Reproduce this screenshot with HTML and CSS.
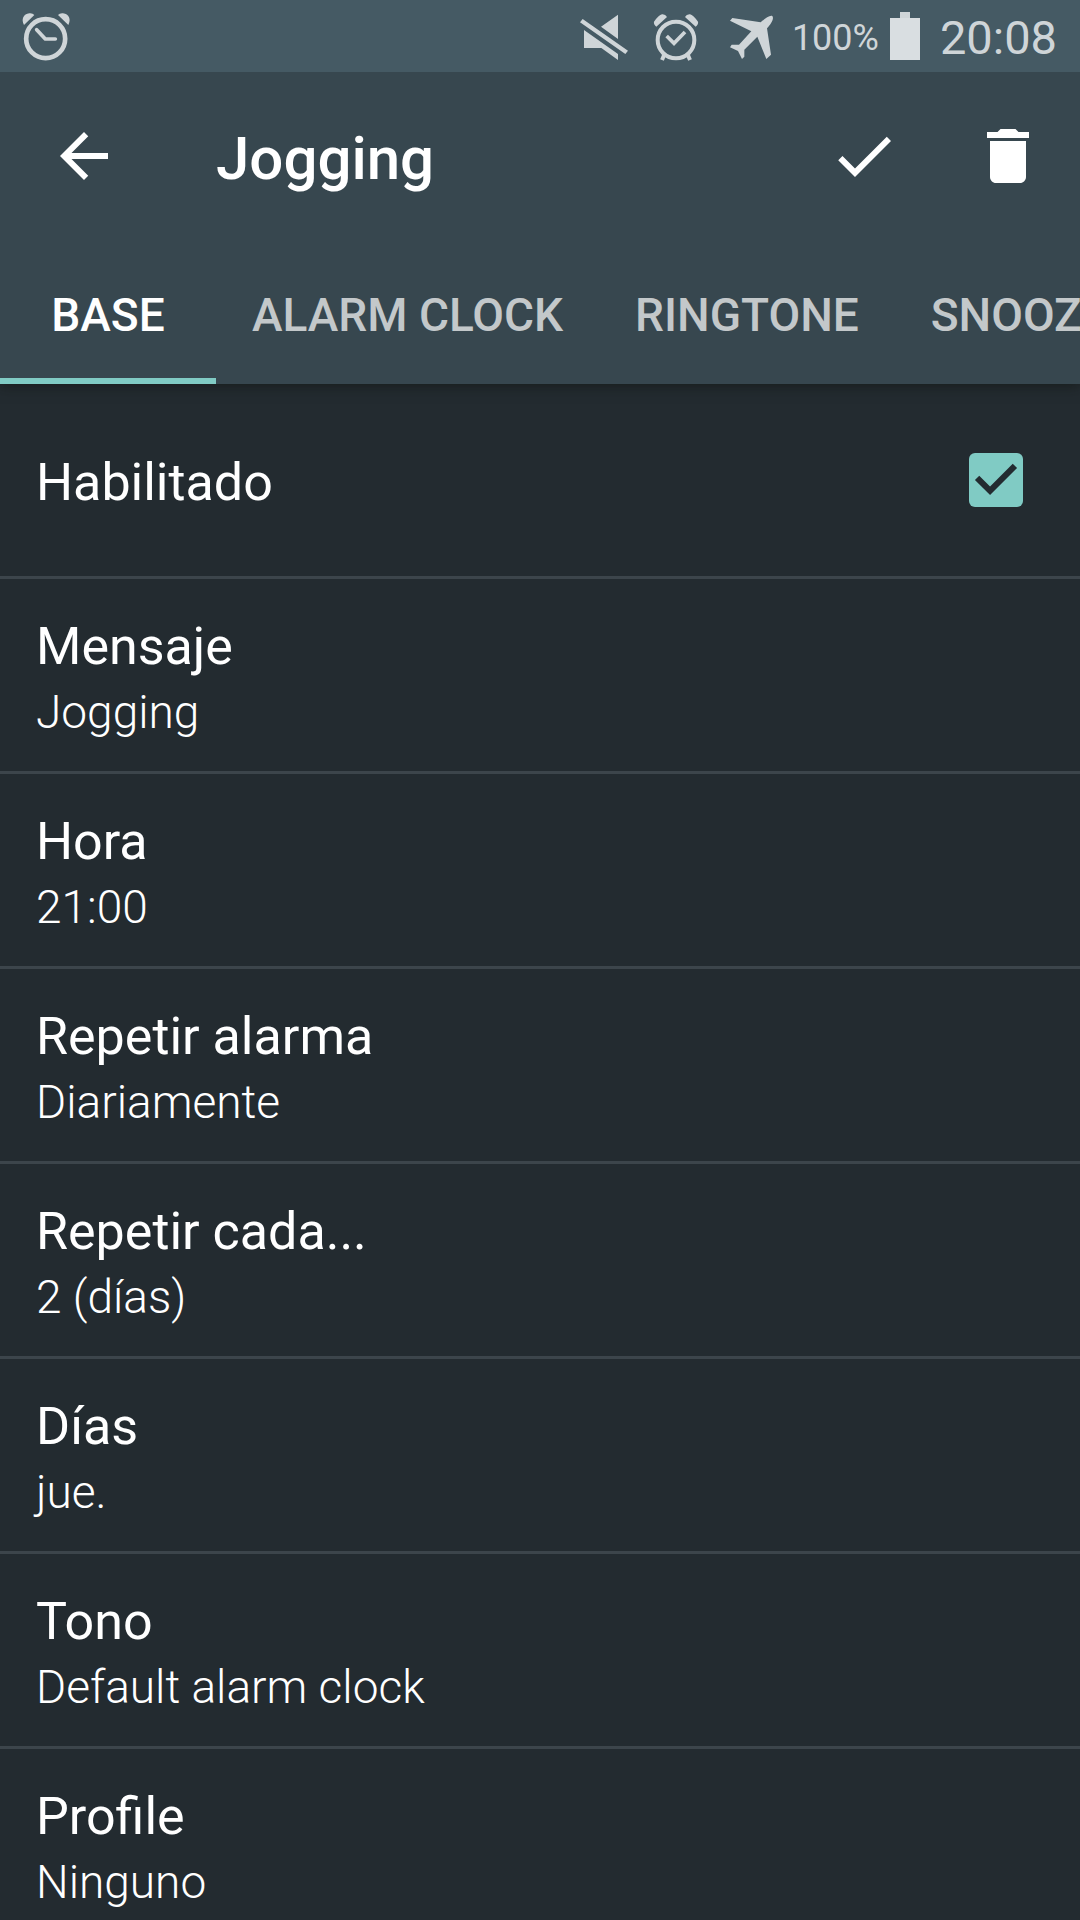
FILE: index.html
```html
<!DOCTYPE html>
<html lang="es">
<head>
<meta charset="utf-8">
<meta name="viewport" content="width=device-width, initial-scale=1">
<title>Jogging</title>
<link rel="stylesheet" href="styles.css">
</head>
<body>
<div class="screen">
  <div class="status-bar">
    <svg class="status-icon status-icon-first" viewBox="60 0 156 216" aria-hidden="true">
      <circle cx="137" cy="116" r="58.500" fill="none" stroke="currentColor" stroke-width="14"/>
      <path d="M110 89L136 117H166" fill="none" stroke="currentColor" stroke-width="11" stroke-linecap="round" stroke-linejoin="round"/>
      <path d="M72 75C63 58 70 42 88 40Q98 39 103 45ZM205 75C214 58 207 42 189 40Q179 39 174 45Z" fill="currentColor"/>
    </svg>
    <svg class="status-icon" viewBox="48 0 156 216" aria-hidden="true">
      <path d="M174 44V117L123 80ZM60 67L68 57L204 152L196 162ZM72 90L174 162V180L124 144H72Z" fill="currentColor"/>
    </svg>
    <svg class="status-icon" viewBox="276 0 156 216" aria-hidden="true">
      <circle cx="348" cy="120" r="55" fill="none" stroke="currentColor" stroke-width="12"/>
      <path d="M320 108L342 130L375 96" fill="none" stroke="currentColor" stroke-width="11"/>
      <path d="M312 166L306 180M384 166L390 180" stroke="currentColor" stroke-width="12"/>
      <path d="M289 80Q280 73 282 65Q296 46 306 43Q316 42 321 51ZM407 80Q416 73 414 65Q400 46 390 43Q380 42 375 51Z" fill="currentColor"/>
    </svg>
    <svg class="status-icon status-icon-plane" viewBox="504 0 144 216" aria-hidden="true">
      <path d="M637 48C630 45 616 54 602 67L517 54L510 62L574 94L537 134L515 134L510 142L534 153L546 177L553 170V149L592 110L619 177L633 164L621 85C634 71 643 56 637 48Z" fill="currentColor"/>
    </svg>
    <span class="battery-level">100%</span>
    <svg class="battery" viewBox="0 0 30 72" aria-hidden="true">
      <path d="M10 12H20V18H10Z" fill="#cfd5d8"/>
      <path d="M0 18H30V60H0Z" fill="#d9dee1"/>
    </svg>
    <time class="clock">20:08</time>
  </div>

  <header class="app-bar">
    <div class="toolbar">
      <button class="icon-button" type="button" aria-label="Atrás">
        <svg class="icon" viewBox="0 0 24 24"><path d="M20 11H7.830l5.590-5.590L12 4l-8 8 8 8 1.410-1.410L7.830 13H20v-2z"/></svg>
      </button>
      <h1 class="title">Jogging</h1>
      <button class="icon-button" type="button" aria-label="Guardar">
        <svg class="icon" viewBox="0 0 24 24"><path d="M9 16.170L4.830 12l-1.420 1.410L9 19 21 7l-1.410-1.410z"/></svg>
      </button>
      <button class="icon-button" type="button" aria-label="Eliminar">
        <svg class="icon" viewBox="0 0 24 24"><path d="M6 19c0 1.100.9 2 2 2h8c1.100 0 2-.9 2-2V7H6v12zM19 4h-3.500l-1-1h-5l-1 1H5v2h14V4z" /></svg>
      </button>
    </div>
    <nav class="tabs">
      <button class="tab tab-active" type="button">BASE</button>
      <button class="tab" type="button">ALARM CLOCK</button>
      <button class="tab" type="button">RINGTONE</button>
      <button class="tab" type="button">SNOOZE</button>
    </nav>
  </header>

  <main class="settings">
    <label class="row row-toggle" for="enabled">
      <span class="row-title">Habilitado</span>
      <input class="checkbox" type="checkbox" id="enabled" checked>
    </label>
    <button class="row" type="button"><span class="row-title">Mensaje</span><span class="row-value">Jogging</span></button>
    <button class="row" type="button"><span class="row-title">Hora</span><span class="row-value">21:00</span></button>
    <button class="row" type="button"><span class="row-title">Repetir alarma</span><span class="row-value">Diariamente</span></button>
    <button class="row" type="button"><span class="row-title">Repetir cada...</span><span class="row-value">2 (días)</span></button>
    <button class="row" type="button"><span class="row-title">Días</span><span class="row-value">jue.</span></button>
    <button class="row" type="button"><span class="row-title">Tono</span><span class="row-value">Default alarm clock</span></button>
    <button class="row" type="button"><span class="row-title">Profile</span><span class="row-value">Ninguno</span></button>
  </main>
</div>
</body>
</html>
```

FILE: styles.css
```css
:root {
  --status: #455a64;
  --primary: #37474f;
  --surface: #232b30;
  --divider: #3c454b;
  --accent: #80cbc4;
}

* {
  box-sizing: border-box;
}

body {
  margin: 0;
  background: var(--surface);
  color: #fff;
  font-family: Roboto, "Noto Sans", sans-serif;
}

button {
  margin: 0;
  padding: 0;
  border: 0;
  background: none;
  color: inherit;
  font: inherit;
}

.screen {
  display: flex;
  flex-direction: column;
  height: 100vh;
  overflow: hidden;
}

/* Status bar */
.status-bar {
  display: flex;
  flex: none;
  align-items: center;
  gap: 24px;
  padding: 0 23px 0 20px;
  background: var(--status);
  color: #cfd5d8;
}

.status-icon {
  width: 52px;
  height: 72px;
}

.status-icon-first {
  margin-right: auto;
}

.status-icon-plane {
  width: 48px;
  margin-right: -8px;
}

.battery-level {
  height: 72px;
  margin-right: -13px;
  font-size: 36px;
  line-height: 76px;
}

.battery {
  width: 30px;
  height: 72px;
  margin-right: -4px;
}

.clock {
  height: 72px;
  font-size: 47px;
  line-height: 76px;
}

/* App bar */
.app-bar {
  position: relative;
  z-index: 1;
  flex: none;
  background: var(--primary);
  box-shadow: 0 2px 12px rgba(16, 20, 16, 0.6);
  clip-path: inset(0 0 -20px 0);
}

.toolbar {
  display: flex;
  align-items: center;
  height: 168px;
  padding-left: 12px;
}

.icon-button {
  display: flex;
  flex: none;
  align-items: center;
  justify-content: center;
  width: 144px;
  height: 144px;
}

.icon {
  width: 72px;
  height: 72px;
  fill: #fff;
}

.title {
  flex: 1;
  margin: 0;
  padding: 5px 0 0 60px;
  font-size: 60px;
  font-weight: 500;
  line-height: 72px;
}

.tabs {
  display: flex;
  overflow: hidden;
}

.tab {
  flex: none;
  min-width: 216px;
  height: 144px;
  padding: 11px 36px 0;
  border-bottom: 6px solid transparent;
  color: #c3c8ca;
  font-size: 46px;
  font-weight: 500;
  white-space: nowrap;
}

.tab-active {
  border-bottom-color: var(--accent);
  color: #fff;
}

/* Settings list */
.settings {
  flex: 1;
  min-height: 0;
  overflow-y: auto;
  scrollbar-width: none;
}

.row {
  display: flex;
  flex-direction: column;
  width: 100%;
  min-height: 195px;
  padding: 35px 36px 27px;
  border-bottom: 3px solid var(--divider);
  text-align: left;
}

.row-toggle {
  flex-direction: row;
  align-items: center;
  justify-content: space-between;
  padding: 0 57px 0 36px;
}

.row-title {
  font-size: 52px;
  line-height: 66px;
}

.row-toggle .row-title {
  padding-top: 5px;
}

.row-value {
  font-size: 46px;
  font-weight: 300;
  line-height: 64px;
}

.checkbox {
  display: block;
  width: 54px;
  height: 54px;
  margin: 0;
  border-radius: 6px;
  appearance: none;
  background: var(--divider);
}

.checkbox:checked {
  background: var(--accent);
}

.checkbox:checked::before {
  content: "";
  display: block;
  height: 100%;
  background: var(--surface);
  clip-path: polygon(39% 78%, 11% 50%, 19% 42%, 39% 62%, 81% 20%, 89% 28%);
}
```
